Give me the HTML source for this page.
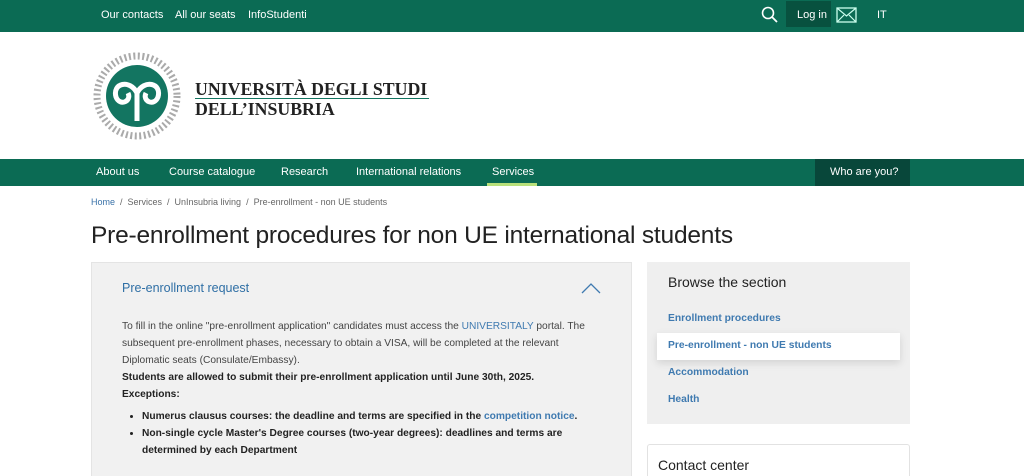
<!DOCTYPE html>
<html><head><meta charset="utf-8"><style>
*{margin:0;padding:0;box-sizing:border-box}
html,body{width:1024px;height:476px;overflow:hidden}
body{background:#fff;font-family:"Liberation Sans",sans-serif;color:#222;position:relative}
.abs{position:absolute}
.top{left:0;top:0;width:1024px;height:32px;background:#0b6b54}
.top a{position:absolute;top:9px;color:#fff;font-size:11px;text-decoration:none}
.nav{left:0;top:159px;width:1024px;height:27px;background:#0b6b54}
.nav span{position:absolute;top:7px;color:#fff;font-size:11px}
.crumb{left:91px;top:197px;font-size:9px;color:#666}
.crumb b{font-weight:normal;color:#3a72a8}
h1{position:absolute;left:91px;top:222px;font-size:24.5px;font-weight:normal;color:#222;letter-spacing:-0.2px}
.box{left:91px;top:262px;width:541px;height:214px;background:#f1f1f1;border:1px solid #e4e4e4;border-bottom:none}
.box p{font-size:10.2px;line-height:17px;color:#444}
.side{left:647px;top:262px;width:263px;height:162px;background:#efefef}
.side .l{position:absolute;left:21px;font-size:10.3px;color:#3f7ab0;font-weight:bold}
</style></head><body>
<div class="abs top">
<a style="left:101px">Our contacts</a><a style="left:175px">All our seats</a><a style="left:248px">InfoStudenti</a>
<svg class="abs" style="left:761px;top:6px" width="18" height="18" viewBox="0 0 18 18"><circle cx="7" cy="7" r="5.5" fill="none" stroke="#fff" stroke-width="1.6"/><line x1="11" y1="11" x2="16" y2="16" stroke="#fff" stroke-width="1.8"/></svg>
<div class="abs" style="left:786px;top:1px;width:45px;height:26px;background:#08513f"></div>
<a style="left:797px">Log in</a>
<svg class="abs" style="left:836px;top:7px" width="21" height="16" viewBox="0 0 21 16"><rect x="1" y="1" width="19" height="14" fill="none" stroke="#cfe" stroke-width="1.3"/><path d="M1 1 L10.5 9 L20 1 M1 15 L8 8 M20 15 L13 8" fill="none" stroke="#cfe" stroke-width="1.2"/></svg>
<a style="left:877px">IT</a>
</div>
<svg class="abs" style="left:90px;top:49px" width="96" height="96" viewBox="0 0 96 96">
<circle cx="47" cy="47" r="31" fill="#137561"/>
<path d="M47 72 V44 M47 44 C40 30 22 34 26 48 C30 58 42 52 38 44 M47 44 C54 30 72 34 68 48 C64 58 52 52 56 44" fill="none" stroke="#fff" stroke-width="5"/>
<circle cx="47" cy="47" r="40" fill="none" stroke="#555" stroke-width="7" stroke-dasharray="2 2.5" opacity=".5"/>
</svg>
<div class="abs" style="left:195px;top:79px;font-family:'Liberation Serif',serif;font-weight:bold;font-size:17.8px;color:#222">UNIVERSITÀ DEGLI STUDI</div>
<div class="abs" style="left:195px;top:98px;width:234px;height:1px;background:#137561"></div>
<div class="abs" style="left:195px;top:99px;font-family:'Liberation Serif',serif;font-weight:bold;font-size:17.8px;color:#222">DELL’INSUBRIA</div>
<div class="abs nav">
<span style="left:96px">About us</span><span style="left:169px">Course catalogue</span><span style="left:281px">Research</span><span style="left:356px">International relations</span><span style="left:492px">Services</span>
<div class="abs" style="left:487px;top:24px;width:50px;height:3px;background:#b8e07a"></div>
<div class="abs" style="left:815px;top:0;width:95px;height:27px;background:#08473a"></div>
<span style="left:830px">Who are you?</span>
</div>
<div class="abs crumb"><b>Home</b> &nbsp;/&nbsp; Services &nbsp;/&nbsp; UnInsubria living &nbsp;/&nbsp; Pre-enrollment - non UE students</div>
<h1>Pre-enrollment procedures for non UE international students</h1>
<div class="abs box">
<div class="abs" style="left:30px;top:18px;font-size:12.5px;color:#2f6fa5">Pre-enrollment request</div>
<svg class="abs" style="left:489px;top:19px" width="20" height="12" viewBox="0 0 20 12"><path d="M1 11 L10 2 L19 11" fill="none" stroke="#3f7ab0" stroke-width="1.3"/></svg>
<div class="abs" style="left:30px;top:55px;width:475px">
<p>To fill in the online "pre-enrollment application" candidates must access the <span style="color:#3f7ab0">UNIVERSITALY</span> portal. The subsequent pre-enrollment phases, necessary to obtain a VISA, will be completed at the relevant Diplomatic seats (Consulate/Embassy).</p>
<p style="font-weight:bold;color:#222">Students are allowed to submit their pre-enrollment application until June 30th, 2025.<br>Exceptions:</p>
<ul style="margin-top:5px;padding-left:20px;font-size:10.2px;line-height:17px;font-weight:bold;color:#222">
<li>Numerus clausus courses: the deadline and terms are specified in the <span style="color:#3f7ab0">competition notice</span>.</li>
<li>Non-single cycle Master's Degree courses (two-year degrees): deadlines and terms are determined by each Department</li></ul>
</div></div>
<div class="abs side">
<div class="abs" style="left:21px;top:12px;font-size:14px;color:#222">Browse the section</div>
<div class="l" style="top:51px">Enrollment procedures</div>
<div class="abs" style="left:10px;top:71px;width:243px;height:27px;background:#fff;box-shadow:0 3px 8px rgba(0,0,0,.12)"></div>
<div class="l" style="top:78px">Pre-enrollment - non UE students</div>
<div class="l" style="top:105px">Accommodation</div>
<div class="l" style="top:132px">Health</div>
</div>
<div class="abs" style="left:647px;top:444px;width:263px;height:32px;border:1px solid #e2e2e2;border-bottom:none;border-radius:3px 3px 0 0;background:#fff"></div>
<div class="abs" style="left:658px;top:457px;font-size:14px;color:#222">Contact center</div>
</body></html>
